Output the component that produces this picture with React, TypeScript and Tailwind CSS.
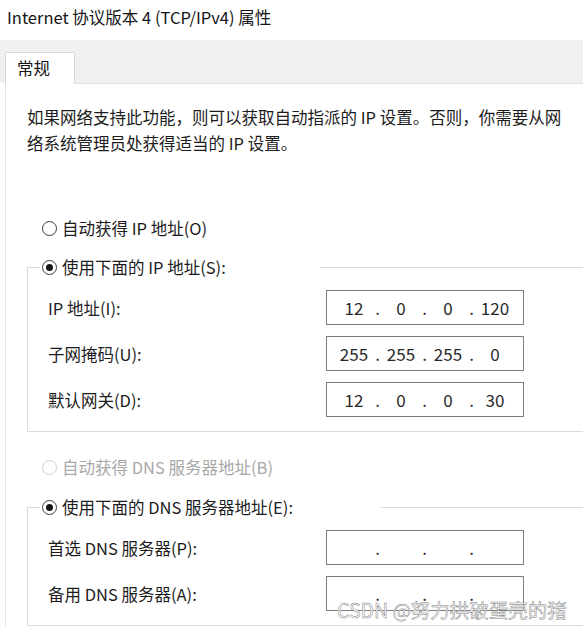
import React from 'react';
import clsx from 'clsx';

// Windows "Internet 协议版本 4 (TCP/IPv4) 属性" dialog, general tab

function Radio({ checked = false, disabled = false }: { checked?: boolean; disabled?: boolean }) {
  return (
    <span
      className={clsx(
        'w-[15px] h-[15px] rounded-full border bg-white flex items-center justify-center shrink-0',
        disabled ? 'border-[#d2d2d2]' : 'border-[#3a3a3a]'
      )}
    >
      {checked && <span className="w-[7px] h-[7px] rounded-full bg-[#161616]" />}
    </span>
  );
}

function IpBox({ parts = ['', '', '', ''] }: { parts?: string[] }) {
  return (
    <div className="w-[198px] h-[35px] border border-[#7d7d7d] bg-white flex items-center pl-[7px] text-[17px] leading-[20px] text-[#2a2a2a]">
      {parts.map((p, i) => (
        <React.Fragment key={i}>
          {i > 0 && <span className="w-[7px] text-center">.</span>}
          <span className="w-[40px] text-center">{p}</span>
        </React.Fragment>
      ))}
    </div>
  );
}

interface Row {
  label: string;
  parts?: string[];
}

function Group({ legend, legendWidth, rows }: { legend: string; legendWidth: string; rows: Row[] }) {
  return (
    <fieldset className="w-[600px] border border-[#dcdcdc] p-0 m-0">
      <legend className={clsx('ml-[12px] pl-[2px] h-[24px] flex items-center gap-[5px]', legendWidth)}>
        <Radio checked />
        <span className="text-[16.5px] leading-[24px] text-[#1c1c1c]">{legend}</span>
      </legend>
      <div className="grid grid-cols-[278px_198px] items-center gap-y-[11px] pl-[20px] pt-[11px] pb-[14px]">
        {rows.map((r) => (
          <React.Fragment key={r.label}>
            <span className="text-[16.5px] leading-[22px] text-[#1c1c1c]">{r.label}</span>
            <IpBox parts={r.parts} />
          </React.Fragment>
        ))}
      </div>
    </fieldset>
  );
}

export default function App() {
  return (
    <div className='w-[583px] h-[634px] overflow-hidden bg-white relative font-["Noto_Sans_CJK_SC",sans-serif]'>
      <div className="h-[40px] pl-[7px] pt-[6px] text-[16.5px] leading-[22px] text-[#141414]">
        Internet 协议版本 4 (TCP/IPv4) 属性
      </div>

      <div className="bg-[#f0f0f0] pt-[12px] pl-[5px] flex">
        <div className="w-[70px] h-[32px] bg-white border border-b-0 border-[#d9d9d9] pl-[11px] pt-[4px] text-[16.5px] leading-[22px] text-[#141414] -mb-px relative z-10">
          常规
        </div>
      </div>

      <div className="ml-[5px] w-[640px] border-l border-t border-[#e2e2e2] pl-[21px] pt-[20px]">
        <p className="text-[16.5px] leading-[26px] text-[#1c1c1c]">
          如果网络支持此功能，则可以获取自动指派的 IP 设置。否则，你需要从网
          <br />
          络系统管理员处获得适当的 IP 设置。
        </p>

        <div className="mt-[60px] h-[24px] ml-[15px] flex items-center gap-[5px]">
          <Radio />
          <span className="text-[16.5px] text-[#1c1c1c]">自动获得 IP 地址(O)</span>
        </div>

        <div className="mt-[15px]">
          <Group
            legend="使用下面的 IP 地址(S):"
            legendWidth="w-[280px]"
            rows={[
              { label: 'IP 地址(I):', parts: ['12', '0', '0', '120'] },
              { label: '子网掩码(U):', parts: ['255', '255', '255', '0'] },
              { label: '默认网关(D):', parts: ['12', '0', '0', '30'] },
            ]}
          />
        </div>

        <div className="mt-[23px] h-[24px] ml-[15px] flex items-center gap-[5px]">
          <Radio disabled />
          <span className="text-[16.5px] text-[#a8a8a8]">自动获得 DNS 服务器地址(B)</span>
        </div>

        <div className="mt-[16px]">
          <Group
            legend="使用下面的 DNS 服务器地址(E):"
            legendWidth="w-[340px]"
            rows={[{ label: '首选 DNS 服务器(P):' }, { label: '备用 DNS 服务器(A):' }]}
          />
        </div>
      </div>

      <div className="absolute left-[337px] top-[598px] text-[19.5px] leading-[24px] text-white [-webkit-text-stroke:0.5px_#808080] whitespace-nowrap">
        CSDN @努力拱破蛋壳的猪
      </div>
    </div>
  );
}
